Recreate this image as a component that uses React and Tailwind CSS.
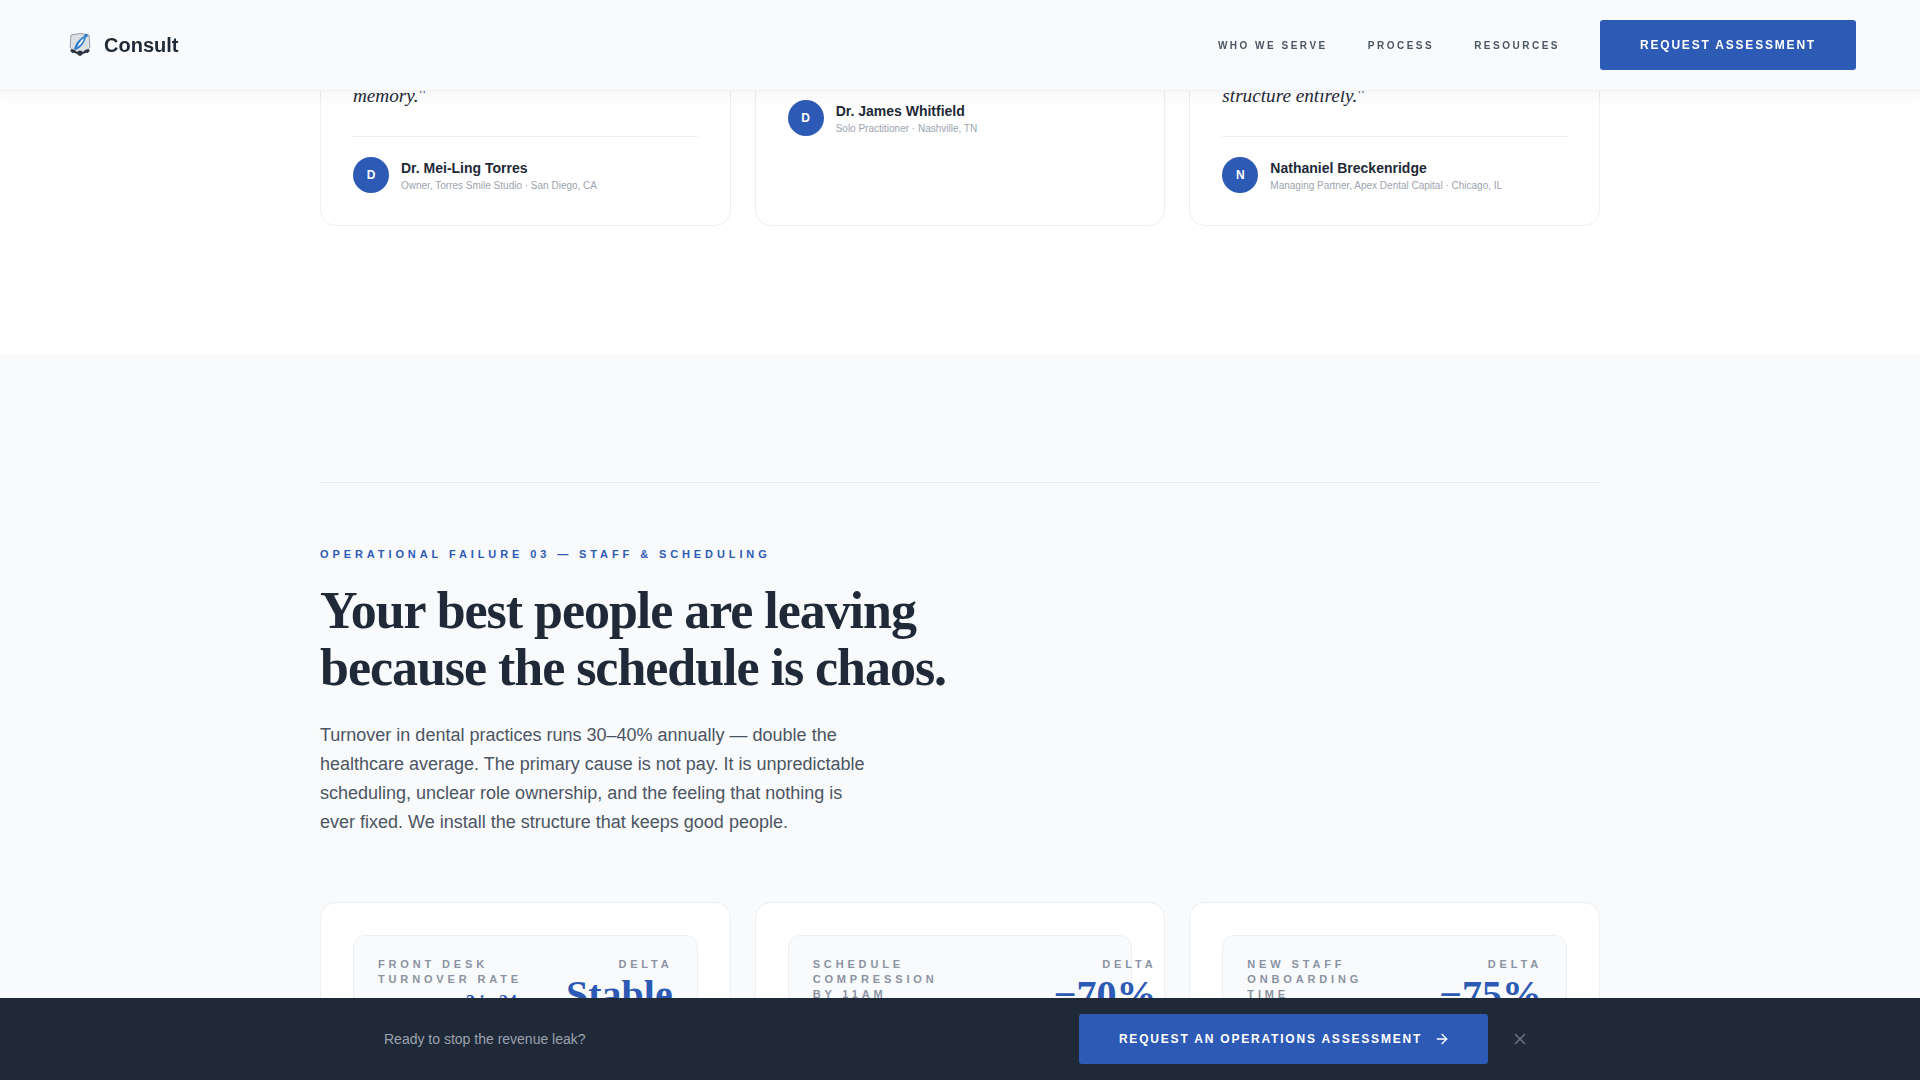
import { ArrowRight, X } from 'lucide-react'

const people = [
  { letter: 'D', name: 'Dr. Mei-Ling Torres', role: 'Owner, Torres Smile Studio · San Diego, CA', quote: 'memory.' },
  { letter: 'D', name: 'Dr. James Whitfield', role: 'Solo Practitioner · Nashville, TN' },
  { letter: 'N', name: 'Nathaniel Breckenridge', role: 'Managing Partner, Apex Dental Capital · Chicago, IL', quote: 'structure entirely.' },
]

const metrics = [
  { label: ['FRONT DESK', 'TURNOVER RATE'], value: 'Stable', before: '3 in 24', left: '' },
  { label: ['SCHEDULE', 'COMPRESSION', 'BY 11AM'], value: '−70%', left: 'w-[241px] shrink-0' },
  { label: ['NEW STAFF', 'ONBOARDING', 'TIME'], value: '−75%', left: '' },
]

function Logo() {
  return (
    <svg width="24" height="26" viewBox="0 0 24 26" fill="none">
      <path d="M3 3 Q12 0 21 3 L22 15 Q18 21 12 24 Q6 21 2 15 Z" fill="#dcdfe3" stroke="#9aa0a9" strokeWidth="1" />
      <path d="M6 17 C8 10 12 6 18 3 C18 9 14 15 8 18 Z" fill="#2f80c8" />
      <path d="M9 15 C11 11 13 8 16 6 C15 10 13 13 9 15 Z" fill="#ffffff" />
      <circle cx="18" cy="3.5" r="1.8" fill="#2f80c8" />
      <path d="M2 18 Q6 16 9 20 Q12 17 15 20 Q18 16 22 18 L20 21 Q16 20 12 24 Q8 20 4 21 Z" fill="#2b3340" />
    </svg>
  )
}

function Header() {
  return (
    <header className="fixed top-0 left-0 right-0 z-20 h-[91px] bg-[#f9fafc] border-b border-[#eceff3] shadow-[0_4px_16px_rgba(30,41,59,0.05)] flex items-center justify-between pl-[68px] pr-[64px]">
      <div className="flex items-center gap-3">
        <Logo />
        <span className="text-[20px] font-bold text-[#1f2937]">Consult</span>
      </div>
      <nav className="flex items-center gap-10">
        <a className="text-[10px] font-bold tracking-[0.25em] text-[#4b5563]">WHO WE SERVE</a>
        <a className="text-[10px] font-bold tracking-[0.25em] text-[#4b5563]">PROCESS</a>
        <a className="text-[10px] font-bold tracking-[0.25em] text-[#4b5563]">RESOURCES</a>
        <button className="w-[256px] h-[50px] rounded-[3px] bg-[#2d5ab5] text-white text-[12px] font-bold tracking-[0.15em]">REQUEST ASSESSMENT</button>
      </nav>
    </header>
  )
}

function PersonCard({ person }) {
  return (
    <div className="bg-white border border-[#eceff3] rounded-2xl px-8 pb-8 pt-8 flex flex-col">
      {person.quote ? (
        <>
          <p className="mt-[48px] font-['Liberation_Serif',serif] italic text-[19.2px] leading-[30px] text-[#1f2937]">
            {person.quote}<span className="not-italic text-[#6b7280]">"</span>
          </p>
          <div className="mt-[25px] pt-[20px] border-t border-[#eceff3]">
            <Person person={person} />
          </div>
        </>
      ) : (
        <div className="mt-[67px]">
          <Person person={person} />
        </div>
      )}
    </div>
  )
}

function Person({ person }) {
  return (
    <div className="flex items-center gap-3">
      <div className="w-9 h-9 rounded-full bg-[#2d5ab5] text-white text-[12px] font-bold flex items-center justify-center">{person.letter}</div>
      <div>
        <div className="text-[14px] leading-[20px] font-bold text-[#1f2937]">{person.name}</div>
        <div className="text-[10px] leading-[15px] text-[#9ca3af]">{person.role}</div>
      </div>
    </div>
  )
}

function MetricCard({ metric }) {
  return (
    <div className="bg-white border border-[#eceff3] rounded-2xl p-8 h-[300px]">
      <div className="bg-[#f9fafc] border border-[#eceff3] rounded-xl py-[21px] pl-6 pr-6 flex justify-between">
        <div className={metric.left}>
          <div className="text-[11px] leading-[15px] font-bold tracking-[0.35em] text-[#8a93a3]">
            {metric.label.map((line) => <div key={line}>{line}</div>)}
          </div>
          {metric.before && <div className="mt-[2px] pr-[5px] font-['Liberation_Serif',serif] font-bold text-[18px] text-[#2d5ab5] text-right">{metric.before}</div>}
        </div>
        <div className="flex flex-col items-end whitespace-nowrap">
          <div className="text-[11px] leading-[15px] font-bold tracking-[0.35em] text-[#8a93a3]">DELTA</div>
          <div className="mt-[1px] font-['Liberation_Serif',serif] text-[40px] leading-[44px] font-bold text-[#2d5ab5]">{metric.value}</div>
        </div>
      </div>
    </div>
  )
}

export default function App() {
  return (
    <div className="h-screen overflow-hidden bg-white font-['Liberation_Sans',sans-serif]">
      <Header />
      <section className="pb-[128px]">
        <div className="w-[1280px] mx-auto grid grid-cols-3 gap-6">
          {people.map((p) => <PersonCard key={p.name} person={p} />)}
        </div>
      </section>
      <section className="bg-[#f9fafc] pt-[128px]">
        <div className="w-[1280px] mx-auto">
          <div className="border-t border-[#e5e9ef] pt-[63px]">
            <div className="text-[11px] leading-[16px] font-bold tracking-[3.9px] text-[#2d5ab5]">OPERATIONAL FAILURE 03 — STAFF &amp; SCHEDULING</div>
            <h2 className="mt-[20px] font-['Liberation_Serif',serif] text-[52px] leading-[57px] font-bold tracking-[-0.02em] text-[#1f2937]">Your best people are leaving<br />because the schedule is chaos.</h2>
            <p className="mt-[25px] w-[560px] text-[18px] leading-[29px] text-[#4b5563]">Turnover in dental practices runs 30–40% annually — double the healthcare average. The primary cause is not pay. It is unpredictable scheduling, unclear role ownership, and the feeling that nothing is ever fixed. We install the structure that keeps good people.</p>
            <div className="mt-[65px] grid grid-cols-3 gap-6">
              {metrics.map((m) => <MetricCard key={m.label[0]} metric={m} />)}
            </div>
          </div>
        </div>
      </section>
      <div className="fixed bottom-0 left-0 right-0 z-20 h-[82px] bg-[#1f2937] flex items-center pl-[384px]">
        <span className="text-[14px] text-[#9ca3af]">Ready to stop the revenue leak?</span>
        <button className="ml-auto w-[409px] h-[50px] rounded-[3px] bg-[#2d5ab5] pl-[2px] text-white text-[12px] font-bold tracking-[0.15em] flex items-center justify-center gap-3">
          REQUEST AN OPERATIONS ASSESSMENT
          <ArrowRight size={16} strokeWidth={2} />
        </button>
        <X size={18} className="ml-[23px] mr-[391px] text-[#6b7280]" />
      </div>
    </div>
  )
}
